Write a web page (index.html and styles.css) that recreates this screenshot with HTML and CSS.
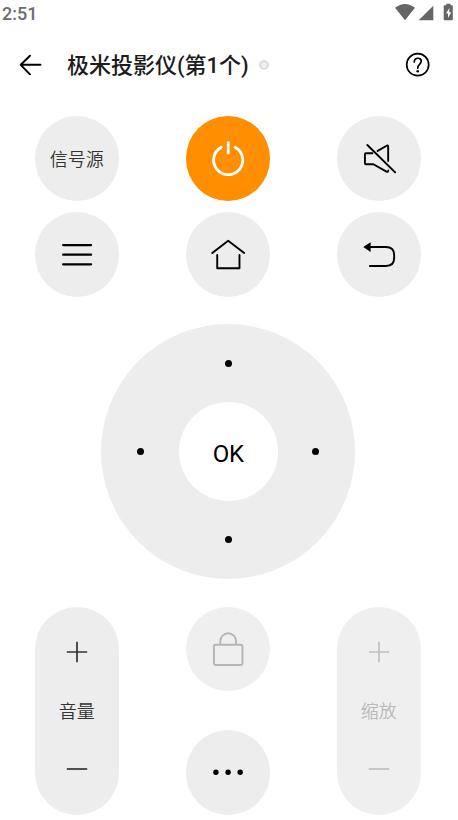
FILE: index.html
```html
<!DOCTYPE html>
<html lang="zh-CN">
<head>
<meta charset="utf-8">
<title>极米投影仪</title>
<link rel="stylesheet" href="styles.css">
</head>
<body>
<div class="status">
  <span class="clock">2:51</span>
  <svg class="status-icons" width="62" height="20" viewBox="0 0 62 20">
    <path d="M0 5.800Q10 -1.800 20 5.800L10 18.300Z"/>
    <path d="M38.300 3.700V18.300H23.700Z"/>
    <path fill-rule="evenodd" d="M50.700 3.300H49.500Q48.700 3.300 48.700 4.300V17.300Q48.700 18.300 49.700 18.300H56.800Q57.800 18.300 57.800 17.300V4.300Q57.800 3.300 57 3.300H55.500V1.700H51.300V3.300ZM54.300 6L51 11.600H53V16L56.200 10.200H54.300Z"/>
  </svg>
</div>
<header class="bar">
  <svg class="back" width="24" height="24" viewBox="0 0 24 24"><path d="M12 2.700L2.700 11.800L12 21.300M2.700 11.800H22.500"/></svg>
  <h1 class="title">极米投影仪(第1个)</h1>
  <span class="state"></span>
  <svg class="help" width="26" height="26" viewBox="0 0 26 26"><circle cx="12.700" cy="12.700" r="11"/><path d="M9.300 9.900C9.300 5 16.500 5.200 16.300 9.400C16.100 12.200 12.700 12.200 12.700 16.200"/><circle class="solid" cx="12.700" cy="19.300" r="1.300"/></svg>
</header>
<main class="remote">
  <div class="keys">
    <div class="key">信号源</div>
    <div class="key power"><svg viewBox="0 0 84.500 84.500"><path d="M35.400 31.200A14.600 14.600 0 1 0 49.200 31.200M42.300 26.500V37"/></svg></div>
    <div class="key"><svg viewBox="0 0 84.500 84.500"><path d="M40.700 34.900L49.800 29.700Q51.300 29 51.300 30.700V45M35.500 37.300H29Q28 37.300 28 38.300V47.300Q28 48.300 29 48.300H36.500L49.600 55.700Q51 56.400 51.500 54.400M30.400 29L58.300 56.400"/></svg></div>
    <div class="key"><svg class="menu" viewBox="0 0 84.500 84.500"><path d="M28.200 33H56.200M28.200 42.700H56.200M28.200 52.300H56.200"/></svg></div>
    <div class="key"><svg viewBox="0 0 84.500 84.500"><path d="M26.300 41L42.300 28.700L58.300 41M31.300 43V56.300H53.600V43"/></svg></div>
    <div class="key"><svg viewBox="0 0 84.500 84.500"><path d="M32 35H49Q57.300 35 57.300 43V46Q57.300 54 49 54H33"/><path class="solid" d="M26.300 35L33.700 30.200V40Z"/></svg></div>
  </div>
  <div class="dial">
    <i class="dot up"></i>
    <i class="dot left"></i>
    <div class="ok">OK</div>
    <i class="dot right"></i>
    <i class="dot down"></i>
  </div>
  <div class="lower">
    <div class="pill">
      <svg width="22" height="22" viewBox="0 0 22 22"><path d="M.8 11H21.200M11 .8V21.200"/></svg>
      <span>音量</span>
      <svg width="22" height="22" viewBox="0 0 22 22"><path d="M.8 11H21.200"/></svg>
    </div>
    <div class="middle">
      <div class="key lock"><svg viewBox="0 0 84.500 84.500"><rect x="28" y="37.700" width="28.600" height="20.300" rx="1.500"/><path d="M34.400 37V34.100A7.900 7.900 0 0 1 50.200 34.100V37"/></svg></div>
      <div class="key"><svg viewBox="0 0 84.500 84.500"><g class="solid"><circle cx="30" cy="42.200" r="2.700"/><circle cx="42.200" cy="42.200" r="2.700"/><circle cx="54.300" cy="42.200" r="2.700"/></g></svg></div>
    </div>
    <div class="pill off">
      <svg width="22" height="22" viewBox="0 0 22 22"><path d="M.8 11H21.200M11 .8V21.200"/></svg>
      <span>缩放</span>
      <svg width="22" height="22" viewBox="0 0 22 22"><path d="M.8 11H21.200"/></svg>
    </div>
  </div>
</main>
</body>
</html>
```
FILE: styles.css
```css
* { box-sizing: border-box; }
body {
  margin: 0;
  width: 458px;
  height: 820px;
  overflow: hidden;
  background: #fff;
  color: #333;
  font-family: Roboto, "Noto Sans CJK SC", sans-serif;
}
svg {
  display: block;
  fill: none;
  stroke: #000;
  stroke-width: 1.900;
  stroke-linecap: round;
  stroke-linejoin: round;
}
.solid { fill: #000; stroke: none; }
.status {
  display: flex;
  justify-content: space-between;
  height: 26px;
  padding: 2px 1px 0 2px;
}
.clock { font-size: 18px; line-height: 23px; color: #6c6c6c; font-weight: 500; }
.status-icons { fill: #666; stroke: none; }
.bar {
  display: flex;
  align-items: center;
  height: 78px;
  padding: 0 27px 0 18px;
}
.title {
  margin: 2px 0 0 25px;
  font-size: 22px;
  line-height: 30px;
  font-weight: 500;
  color: #1c1c1c;
  white-space: nowrap;
}
.state {
  width: 10px;
  height: 10px;
  margin-left: 10px;
  border: 2px solid #dcdddf;
  border-radius: 50%;
  background: #eee;
}
.help { margin-left: auto; stroke-width: 1.700; }
.remote { padding: 12px 37px 0 34.700px; }
.keys {
  display: grid;
  grid-template-columns: repeat(3, 84.300px);
  justify-content: space-between;
  row-gap: 11.500px;
}
.key {
  display: flex;
  align-items: center;
  justify-content: center;
  width: 84.300px;
  height: 84.500px;
  border-radius: 50%;
  background: #ededed;
  font-size: 18px;
  font-weight: 350;
}
.key svg { width: 84.500px; height: 84.500px; }
.power { background: #ff8f00; }
.power svg { stroke: #fff; stroke-width: 2.800; }
.key .menu { stroke-width: 2.300; }
.dial {
  display: grid;
  grid-template-columns: 77.500px 99px 77.500px;
  grid-template-rows: 78px 99px 78px;
  place-items: center;
  width: 254px;
  height: 255px;
  margin: 27.500px 0 0 66.500px;
  border-radius: 50%;
  background: #ededed;
}
.dot { width: 7px; height: 7px; border-radius: 50%; background: #000; }
.up, .down { grid-column: 1 / -1; }
.down { margin-bottom: 2px; }
.right { margin-right: 2px; }
.left { margin-left: 1px; }
.ok {
  display: flex;
  align-items: center;
  justify-content: center;
  width: 99px;
  height: 99px;
  padding-top: 4px;
  border-radius: 50%;
  background: #fff;
  color: #000;
  font-size: 24px;
  font-weight: 400;
  letter-spacing: -.4px;
}
.lower { display: flex; justify-content: space-between; margin-top: 27.500px; }
.pill {
  display: flex;
  flex-direction: column;
  align-items: center;
  justify-content: space-between;
  width: 84.300px;
  height: 208px;
  padding: 34.500px 0;
  border-radius: 43px;
  background: #ededed;
  font-size: 18px;
  line-height: 26px;
  font-weight: 350;
}
.pill span { padding-top: 3px; }
.pill svg { stroke: #333; stroke-width: 1.700; stroke-linecap: butt; }
.middle { display: flex; flex-direction: column; justify-content: space-between; height: 208px; }
.lock { background: #efefef; }
.lock svg { stroke: #b5b5b5; }
.off { background: #efefef; color: #bababa; }
.off svg { stroke: #bfbfbf; }
```
